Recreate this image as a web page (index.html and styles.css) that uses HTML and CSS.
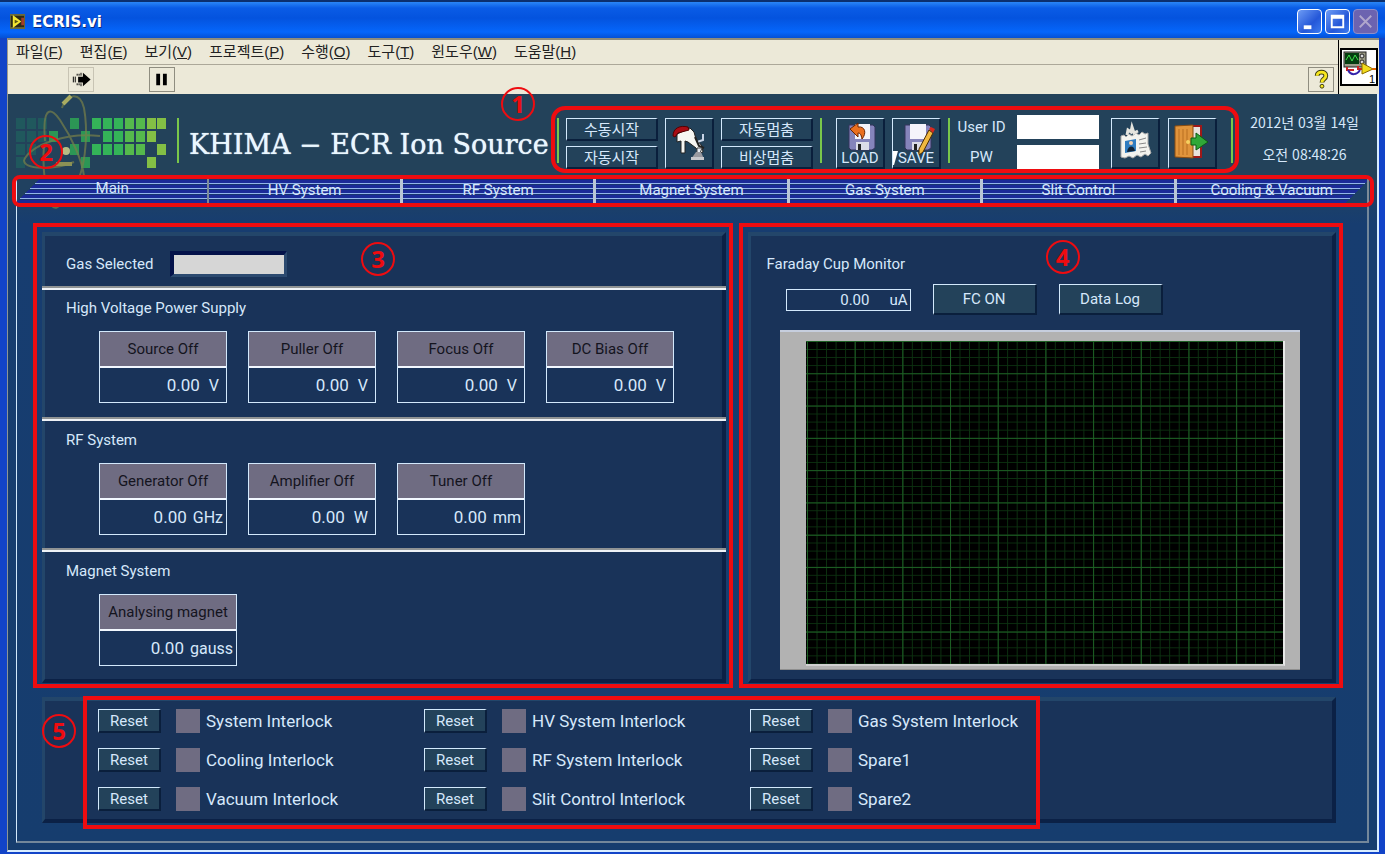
FILE: index.html
```html
<!DOCTYPE html>
<html lang="ko">
<head>
<meta charset="utf-8">
<title>ECRIS.vi</title>
<link rel="stylesheet" href="styles.css">
</head>
<body>
<div class="window">
  <header class="titlebar">
    <svg class="app-icon" viewBox="0 0 16 16" aria-hidden="true"><rect width="16" height="16" fill="#6b6a3a"/><rect x="1" y="2" width="14" height="12" fill="#2b2a18"/><path d="M3 1l9 7-9 7z" fill="#f4e733"/><path d="M5 6l4 2-4 2z" fill="#5a5410"/><path d="M12 4h3v8h-3z" fill="#a33d2a"/></svg>
    <h1 class="window-title">ECRIS.vi</h1>
    <div class="window-buttons">
      <button class="win-btn" aria-label="Minimize"><svg viewBox="0 0 24 24"><path d="M6 16h8v4H6z" fill="#fff"/></svg></button>
      <button class="win-btn" aria-label="Maximize"><svg viewBox="0 0 24 24"><path d="M5 5h14v14H5zM7 9v8h10V9z" fill="#fff" fill-rule="evenodd"/></svg></button>
      <button class="win-btn win-btn-off" aria-label="Close" disabled><svg viewBox="0 0 24 24"><path d="M6 6l12 12M18 6L6 18" stroke="#b0a6cc" stroke-width="2"/></svg></button>
    </div>
  </header>

  <div class="chrome">
    <div class="bars">
      <nav class="menubar">
        <button>파일(<u>F</u>)</button><button>편집(<u>E</u>)</button><button>보기(<u>V</u>)</button><button>프로젝트(<u>P</u>)</button><button>수행(<u>O</u>)</button><button>도구(<u>T</u>)</button><button>윈도우(<u>W</u>)</button><button>도움말(<u>H</u>)</button>
      </nav>
      <div class="toolbar">
        <button class="tool tool-run" aria-label="Run"><svg viewBox="0 0 24 24"><path d="M9 9h5V5l8 7-8 7v-4H9z" fill="#000"/><path d="M4 9v6M6 9v6M8 6v2M8 16v2M10 6v2M10 16v2M12 5v3M12 16v3" stroke="#000"/></svg></button>
        <button class="tool tool-pause" aria-label="Pause"><svg viewBox="0 0 24 24"><path d="M6 6h4v12H6zM13 6h4v12h-4z" fill="#000"/></svg></button>
        <button class="tool tool-help" aria-label="Help"><svg viewBox="0 0 24 24"><path d="M8 8c0-5 9-5 9 0 0 4-4 3-4 7" fill="none" stroke="#3a3a10" stroke-width="5"/><path d="M8 8c0-5 9-5 9 0 0 4-4 3-4 7" fill="none" stroke="#f6e61e" stroke-width="3"/><circle cx="13" cy="19" r="2" fill="#f6e61e" stroke="#3a3a10"/></svg></button>
      </div>
    </div>
    <div class="vi-slot">
      <svg class="vi-icon" viewBox="0 0 38 38" aria-label="VI icon 1"><rect x="1" y="1" width="36" height="36" fill="#fff" stroke="#000" stroke-width="2"/><rect x="4" y="4" width="22" height="15" fill="#9a9a86" stroke="#222"/><rect x="5" y="5" width="14" height="11" fill="#053d10"/><path d="M6 12l3-5 3 6 3-6 3 5" fill="none" stroke="#3ee04a"/><circle cx="22" cy="8" r="2" fill="#ddd" stroke="#222"/><circle cx="22" cy="14" r="2" fill="#ddd" stroke="#222"/><path d="M7 19v3h7M18 18v3h6" fill="none" stroke="#c22" stroke-width="2"/><path d="M8 22c3 6 9 5 12 0" fill="none" stroke="#32a" stroke-width="2"/><path d="M22 15l11 6-11 5z" fill="#f2dc1c" stroke="#8a6a00"/><path d="M32 21h4" stroke="#d60" stroke-width="2"/><text x="29" y="35" class="vi-num">1</text></svg>
    </div>
  </div>

  <main class="panel">
    <section class="header">
      <svg class="logo" viewBox="0 0 162 115" aria-hidden="true">
        <g fill="#20605f" opacity=".75"><path d="M8 24h9v11H8zM19 24h9v11h-9zM30 24h9v11h-9zM8 37h9v11H8zM19 37h9v11h-9zM30 37h9v11h-9zM8 50h9v11H8zM19 50h9v11h-9zM8 63h9v11H8z"/></g>
        <g fill="#2c9655"><path d="M62 24h9v11h-9zM73 37h9v11h-9zM62 50h9v11h-9zM73 63h9v11h-9zM41 37h9v11h-9z"/></g>
        <g fill="#34b458"><path d="M84 24h9v11h-9zM95 24h9v11h-9zM106 24h9v11h-9zM95 37h9v11h-9zM106 37h9v11h-9zM84 50h9v11h-9zM95 50h9v11h-9zM106 50h9v11h-9z"/></g>
        <g fill="#55b94c"><path d="M117 24h9v11h-9zM128 24h9v11h-9zM117 37h9v11h-9zM128 37h9v11h-9zM117 50h9v11h-9zM128 50h9v11h-9z"/></g>
        <g fill="#83bf45"><path d="M139 24h9v11h-9zM149 24h9v11h-9zM139 37h9v11h-9zM149 50h9v11h-9zM139 63h9v11h-9z"/></g>
        <g fill="none" stroke="#77804a" stroke-width="2" opacity=".7"><path d="M54 14C58 0 72-3 76 14c4 22 2 52-5 70"/><path d="M37 47C34 10 44 14 52 26c12 18 22 40 24 56 1 14-5 14-9 8"/><path d="M16 66C24 50 60 38 92 42M16 66c0 10 30 10 50 2"/><path d="M36 52c-2 24 2 50 8 60 6 6 12-4 14-20"/></g>
        <path d="M55 10l8-8" stroke="#a9ac62" stroke-width="4"/><circle cx="58" cy="57" r="4" fill="#b6bd84"/><path d="M48 70h16" stroke="#8b9155" stroke-width="4"/>
      </svg>
      <i class="rule"></i>
      <h2 class="title">KHIMA − ECR Ion Source</h2>

      <div class="controls">
        <i class="rule"></i>
        <div class="pair">
          <button class="btn">수동시작</button>
          <button class="btn">자동시작</button>
        </div>
        <button class="btn icon-btn" aria-label="Manual switch"><svg viewBox="0 0 48 48"><path d="M11 15l13-6 4 4 2 7 6 7 1 6-3 1-4-5-8-6-3-1v12h-4V22l-4 1z" fill="#f6f6f2" stroke="#222"/><path d="M7 17C7 9 14 6 22 8l1 3-11 3-3 4z" fill="#a80c14" stroke="#500"/><path d="M37 15v6l-6 2" fill="none" stroke="#c8d4e6" stroke-width="2"/><path d="M29 18l4 9 5 2" fill="none" stroke="#222" stroke-width="2"/><path d="M31 29h5l-2 5h-3z" fill="#e8eef6" stroke="#444"/><path d="M30 33h5l3 7H25z" fill="#9a9aa0"/><path d="M25 38h13v3H25z" fill="#c8c8cc"/></svg></button>
        <div class="pair">
          <button class="btn">자동멈춤</button>
          <button class="btn">비상멈춤</button>
        </div>
        <i class="rule"></i>
        <button class="btn icon-btn icon-load"><svg viewBox="0 0 48 48"><path d="M12 6h24l2 2v21l-3 2H14l-2-2z" fill="#8584bb" stroke="#34345c"/><path d="M18 5h15v15H18z" fill="#f4f4fa"/><path d="M19 23h13v8H19z" fill="#dcdce8"/><path d="M21 25h3v6h-3z" fill="#222"/><path d="M13 10l8-6v4c7-1 9 6 4 12-1-5-2-6-4-6v4z" fill="#ea7020" stroke="#6a2400"/></svg><span>LOAD</span></button>
        <button class="btn icon-btn"><svg viewBox="0 0 48 48"><path d="M12 6h24l2 2v21l-3 2H14l-2-2z" fill="#8584bb" stroke="#34345c"/><path d="M17 5h16v15H17z" fill="#f4f4fa"/><path d="M19 23h12v8H19z" fill="#dcdce8"/><path d="M21 25h3v6h-3z" fill="#222"/><path d="M36 11l4 3-10 19-4 3 0-6z" fill="#f0b840" stroke="#4a2c00"/><path d="M36 10l2-2 4 2-2 4z" fill="#d8281c"/><path d="M0 32h5L1 46H0z" fill="#fff"/></svg><span>SAVE</span></button>
        <i class="rule"></i>
        <form class="login">
          <label for="uid">User ID</label><input id="uid" type="text">
          <label for="pw">PW</label><input id="pw" type="password">
        </form>
        <button class="btn icon-btn icon-badge" aria-label="User"><svg viewBox="0 0 48 48"><path d="M9 17l3-1 2 2 3-3 3 2 4-3 3 2 3-3 3 2 3-1v11l3 9-3 3-3-2-4 3-4-2-4 3-4-2-4 2-4-1z" fill="#f3f3ee" stroke="#aaa"/><path d="M15 16l1-5 3 2 1-5 2 6 4-2" fill="none" stroke="#e4e4de" stroke-width="3"/><path d="M13 22l11-2v12l-11 2z" fill="#2f7cc0"/><circle cx="19" cy="24" r="2" fill="#f2d0b0"/><path d="M15 33c1-7 7-7 8-1z" fill="#123"/><path d="M27 21l7-2M27 25l7-1M27 29l8-1M28 33l6-1" stroke="#888"/></svg></button>
        <button class="btn icon-btn icon-exit" aria-label="Exit"><svg viewBox="0 0 48 48"><path d="M23 7h9v31h-9z" fill="#e8e2dc" stroke="#a01818" stroke-width="2"/><path d="M6 7l18-1v33L6 38z" fill="#e0943c" stroke="#8a4c10"/><path d="M10 10v26M14 10v26M18 10v26" stroke="#b86e20"/><circle cx="19" cy="23" r="2" fill="#f6d060"/><path d="M22 19h5v-5l12 9-12 8v-5h-5z" fill="#30a838" stroke="#0c5c14"/></svg></button>
        <i class="rule rule-end"></i>
        <span class="mark-box mark-box-controls"></span>
        <span class="mark mark-1">1</span>
      </div>

      <div class="clock"><span>2012년 03월 14일</span><span>오전 08:48:26</span></div>
      <span class="mark mark-2">2</span>
    </section>

    <nav class="tabs">
      <a class="tab tab-active" href="#main">Main</a><a class="tab" href="#hv">HV System</a><a class="tab" href="#rf">RF System</a><a class="tab" href="#magnet">Magnet System</a><a class="tab" href="#gas">Gas System</a><a class="tab" href="#slit">Slit Control</a><a class="tab tab-last" href="#cooling">Cooling &amp; Vacuum</a>
      <span class="mark-box mark-box-tabs"></span>
    </nav>

    <div class="page" id="main">
      <div class="columns">
        <section class="card status">
          <div class="gas"><label for="gas-sel">Gas Selected</label><input id="gas-sel" class="gas-input" type="text" readonly></div>
          <div class="group">
            <h3>High Voltage Power Supply</h3>
            <div class="readouts">
              <div class="readout"><button>Source Off</button><output>0.00<span>V</span></output></div>
              <div class="readout"><button>Puller Off</button><output>0.00<span>V</span></output></div>
              <div class="readout"><button>Focus Off</button><output>0.00<span>V</span></output></div>
              <div class="readout"><button>DC Bias Off</button><output>0.00<span>V</span></output></div>
            </div>
          </div>
          <div class="group">
            <h3>RF System</h3>
            <div class="readouts">
              <div class="readout long-unit"><button>Generator Off</button><output>0.00<span>GHz</span></output></div>
              <div class="readout"><button>Amplifier Off</button><output>0.00<span>W</span></output></div>
              <div class="readout long-unit"><button>Tuner Off</button><output>0.00<span>mm</span></output></div>
            </div>
          </div>
          <div class="group">
            <h3>Magnet System</h3>
            <div class="readouts">
              <div class="readout wide long-unit"><button>Analysing magnet</button><output>0.00<span>gauss</span></output></div>
            </div>
          </div>
          <span class="mark-box mark-box-card"></span>
          <span class="mark mark-3">3</span>
        </section>

        <section class="card monitor">
          <h3>Faraday Cup Monitor</h3>
          <div class="monitor-bar">
            <output class="current"><span>0.00</span><span>uA</span></output>
            <button class="btn text-btn">FC ON</button>
            <button class="btn text-btn">Data Log</button>
          </div>
          <div class="chart"><div class="plot"></div></div>
          <span class="mark-box mark-box-card"></span>
          <span class="mark mark-4">4</span>
        </section>
      </div>

      <section class="card interlocks">
        <div class="lock"><button class="btn">Reset</button><i class="led"></i><span>System Interlock</span></div>
        <div class="lock"><button class="btn">Reset</button><i class="led"></i><span>HV System Interlock</span></div>
        <div class="lock"><button class="btn">Reset</button><i class="led"></i><span>Gas System Interlock</span></div>
        <div class="lock"><button class="btn">Reset</button><i class="led"></i><span>Cooling Interlock</span></div>
        <div class="lock"><button class="btn">Reset</button><i class="led"></i><span>RF System Interlock</span></div>
        <div class="lock"><button class="btn">Reset</button><i class="led"></i><span>Spare1</span></div>
        <div class="lock"><button class="btn">Reset</button><i class="led"></i><span>Vacuum Interlock</span></div>
        <div class="lock"><button class="btn">Reset</button><i class="led"></i><span>Slit Control Interlock</span></div>
        <div class="lock"><button class="btn">Reset</button><i class="led"></i><span>Spare2</span></div>
        <span class="mark-box mark-box-locks"></span>
        <span class="mark mark-5">5</span>
      </section>
    </div>
  </main>
</div>
</body>
</html>
```

FILE: styles.css
```css
:root {
  --edge: #d3e9fc;
  --shade: #0a1f3c;
  --text: #d6e8fb;
  --steel: #23425a;
  --card: #193359;
  --grey: #6f6c82;
  --red: #ee0c10;
  --latin: Roboto, "Noto Sans CJK KR", sans-serif;
}

* { box-sizing: border-box; }

body {
  margin: 0;
  font-family: var(--latin);
  font-size: 15px;
  line-height: 20px;
  color: var(--text);
}

button, input { font: inherit; color: inherit; margin: 0; padding: 0; border-radius: 0; }
h1, h2, h3 { margin: 0; font-weight: 400; font-size: inherit; }
a { color: inherit; text-decoration: none; }

.window {
  display: flex;
  flex-direction: column;
  min-height: 100vh;
  padding: 0 6px 3px 5px;
  background: #1244c8;
}

/* Title bar */
.titlebar {
  display: flex;
  align-items: center;
  gap: 7px;
  height: 38px;
  margin: 0 -6px 0 -5px;
  padding: 3px 7px 0 10px;
  border-top: 2px solid #0b2f6e;
  background: linear-gradient(#2a86f6 0, #0a5ce6 6px, #0453de 16px, #0566fb 30px, #0450d4 36px);
  color: #fff;
}
.app-icon { width: 15px; height: 15px; }
.window-title { font: 700 15px/20px "DejaVu Sans", sans-serif; text-shadow: 1px 1px #0a2a80; }
.window-buttons { display: flex; gap: 3px; margin-left: auto; }
.win-btn {
  width: 25px;
  height: 25px;
  border: 1px solid #fff;
  border-radius: 4px;
  background: linear-gradient(135deg, #6d9cf5, #2457d8 60%, #3d7cf0);
}
.win-btn svg { display: block; width: 100%; height: 100%; }
.win-btn-off { border-color: #8f8ec8; background: #6c63b0; }

/* Menu and toolbar */
.chrome {
  display: grid;
  grid-template-columns: 1fr 41px;
  margin-left: 2px;
  border-top: 2px solid #8e8c7c;
  border-left: 1px solid #a09c8c;
  background: #ece9d8;
  color: #222;
}
.menubar {
  display: flex;
  gap: 17px;
  height: 25px;
  padding: 0 8px;
  border-bottom: 1px solid #aca899;
}
.menubar button {
  border: 0;
  background: none;
  font: 15px/22px "Liberation Sans", "Noto Sans CJK KR", sans-serif;
}
.toolbar { display: flex; align-items: center; height: 29px; padding: 0 4px 0 60px; }
.tool { width: 26px; height: 25px; border: 1px solid #8f8d80; background: #ece9d8; }
.tool svg { display: block; width: 100%; height: 100%; }
.tool-run { border-color: #c8c4b4; }
.tool-pause { margin-left: 55px; }
.tool-help { margin-left: auto; }
.vi-slot { display: flex; align-items: center; border-left: 1px solid #000; padding: 0 1px; }
.vi-icon { width: 38px; height: 38px; }
.vi-num { font: 11px "Liberation Sans", sans-serif; fill: #000; }

/* Front panel */
.panel {
  flex: 1;
  display: flex;
  flex-direction: column;
  margin-left: 2px;
  padding: 0 8px 7px 8px;
  border: solid #d8ecff;
  border-width: 0 2px 2px 1px;
  border-left-color: #8d9696;
  background: linear-gradient(#23425a 0, #23425a 83px, #1c4068 108px, #173d70 130px, #163d6e);
}
.header {
  position: relative;
  display: flex;
  align-items: flex-end;
  height: 85px;
  padding-bottom: 10px;
  margin-left: -8px;
}
.logo { width: 162px; height: 115px; margin-bottom: -40px; }
.rule { width: 2px; height: 45px; margin-bottom: 6px; background: #79c74a; }
.logo + .rule { margin-left: 7px; }
.title {
  margin-left: 10px;
  font: 27px/48px "DejaVu Serif", serif;
  color: #eaf7ff;
  text-shadow: 0 0 1px #eaf7ff;
  white-space: nowrap;
}

.controls {
  position: relative;
  display: flex;
  align-items: flex-end;
  gap: 7px;
  margin-left: auto;
}
.btn {
  border: solid;
  border-width: 1px 2px 2px 1px;
  border-color: var(--edge) var(--shade) var(--shade) var(--edge);
  background: var(--steel);
  color: var(--text);
  white-space: nowrap;
}
.pair { display: grid; gap: 5px; }
.pair .btn { width: 92px; height: 23px; font: 15px/20px "Noto Sans CJK KR", sans-serif; }
.icon-btn { position: relative; width: 49px; height: 51px; }
.icon-btn svg { position: absolute; inset: 0 auto auto 0; width: 48px; height: 48px; }
.icon-btn span { position: relative; display: block; margin-top: 30px; line-height: 16px; }
.icon-load { margin-left: 7px; }
.icon-badge { margin-left: 5px; }
.icon-exit { margin-left: 1px; }
.rule-end { margin-left: 7px; }
.login {
  display: grid;
  grid-template-columns: 49px 82px;
  gap: 6px 11px;
  align-items: center;
  text-align: center;
  line-height: 24px;
  white-space: nowrap;
}
.login input { width: 82px; height: 24px; border: 0; background: #fff; color: #111; }

.clock {
  display: grid;
  gap: 12px;
  width: 136px;
  padding-left: 7px;
  margin-bottom: 5px;
  text-align: center;
  font: 14px/20px "Noto Sans CJK KR", sans-serif;
  white-space: nowrap;
}

/* Tabs */
.tabs { position: relative; display: flex; height: 25px; border-left: 1px solid var(--edge); }
.tab {
  --stripes: repeating-linear-gradient(#17346f 0 1px, #1b2a98 1px 4px, #93b4ea 4px 5px);
  flex: 1;
  border-right: 3px solid #b9c6d6;
  background: var(--stripes);
  text-align: center;
  line-height: 22px;
}
.tab-active {
  border-right-width: 2px;
  border-right-color: #7d8b98;
  line-height: 18px;
  background: linear-gradient(135deg, #204160 16px, transparent 16px), var(--stripes);
}
.tab-last {
  border-right-width: 2px;
  border-right-color: #7d8b98;
  background: linear-gradient(315deg, #1d4066 16px, transparent 16px), var(--stripes);
}

/* Tab page */
.page {
  flex: 1;
  border: solid #73879a;
  border-width: 0 2px 2px 1px;
  border-left-color: var(--edge);
  padding: 28px 31px 18px 25px;
}
.columns { display: grid; grid-template-columns: 683fr 588fr; gap: 22px; }
.card {
  position: relative;
  border: solid;
  border-width: 4px 4px 4px 3px;
  border-color: #23466a #0b2146 #0b2146 #23466a;
  background: var(--card);
}

.gas { display: flex; align-items: center; gap: 17px; height: 50px; padding: 6px 0 0 21px; }
.gas-input {
  width: 117px;
  height: 26px;
  border: solid;
  border-width: 4px 3px 3px 4px;
  border-color: #04124a #2c4a70 #2c4a70 #04124a;
  background: #d6d6d6;
}
.group {
  margin: 0 -4px 0 -3px;
  padding: 12px 24px 14px;
  background: linear-gradient(#8f9394 2px, #eef2f6 2px, #eef2f6 4px, transparent 4px);
}
.group + .group { padding: 13px 24px; }
.readouts { display: flex; gap: 21px; margin: 13px 0 0 33px; }
.readout { width: 128px; border: 1px solid var(--edge); }
.readout.wide { width: 138px; }
.readout button {
  display: block;
  width: 100%;
  height: 36px;
  border: 0;
  border-bottom: 2px solid #f2f8ff;
  background: var(--grey);
  color: #14141e;
  white-space: nowrap;
}
.readout output {
  display: flex;
  align-items: baseline;
  justify-content: flex-end;
  gap: 9px;
  height: 34px;
  padding: 0 7px;
  line-height: 34px;
  font-size: 17px;
}
.readout output span { font-size: 16px; }
.readout.long-unit output { gap: 6px; padding: 0 3px; }

.monitor { padding: 18px 32px 9px 16px; display: flex; flex-direction: column; }
.monitor-bar { display: flex; align-items: center; gap: 22px; margin: 10px 0 15px 19px; }
.current {
  display: flex;
  justify-content: flex-end;
  gap: 20px;
  width: 125px;
  padding: 0 2px;
  border: 1px solid var(--edge);
  line-height: 20px;
}
.text-btn { width: 104px; height: 31px; }
.chart {
  flex: 1;
  display: flex;
  margin-left: 13px;
  padding: 9px 15px 3px 26px;
  border-top: 2px solid #c6cede;
  border-bottom: 1px solid #8e8e8e;
  background: #b2b2b2;
}
.plot {
  flex: 1;
  border-right: 2px solid #e8e8e8;
  border-bottom: 2px solid #d0d0d0;
  background:
    linear-gradient(90deg, #1d5f24 1px, transparent 1px) 1px 0 / 10% 100%,
    linear-gradient(#1d5f24 1px, transparent 1px) 0 0 / 100% 10%,
    linear-gradient(90deg, #0c3110 1px, transparent 1px) 1px 0 / 2% 100%,
    linear-gradient(#0c3110 1px, transparent 1px) 0 0 / 100% 2.5%,
    #000;
}

.interlocks {
  display: grid;
  grid-template-columns: repeat(3, 326px);
  gap: 15px 0;
  margin-top: 14px;
  padding: 8px 0 8px 53px;
}
.lock { display: flex; align-items: center; font-size: 17px; line-height: 24px; white-space: nowrap; }
.lock .btn { width: 63px; height: 24px; font-size: 15px; line-height: 20px; }
.led { width: 24px; height: 24px; margin: 0 6px 0 15px; background: var(--grey); }

/* Numbered callouts */
.mark-box { position: absolute; border: 4px solid var(--red); pointer-events: none; }
.mark {
  position: absolute;
  width: 34px;
  height: 34px;
  border: 2px solid var(--red);
  border-radius: 50%;
  text-align: center;
  font: 700 24px/30px "Noto Sans", sans-serif;
  color: var(--red);
}
.mark-box-controls { inset: -9px -6px -4px -6px; border-radius: 14px; }
.mark-box-tabs { inset: -4px -5px -3px -5px; border-radius: 8px; }
.mark-box-card { inset: -13px -11px -9px -12px; }
.mark-box-locks { inset: -5px auto -10px 38px; width: 957px; }
.mark-1 { left: -56px; top: -28px; }
.mark-2 { left: 21px; top: 41px; }
.mark-3 { left: 316px; top: 6px; }
.mark-4 { left: 295px; top: 4px; }
.mark-5 { left: -3px; top: 13px; }
```
